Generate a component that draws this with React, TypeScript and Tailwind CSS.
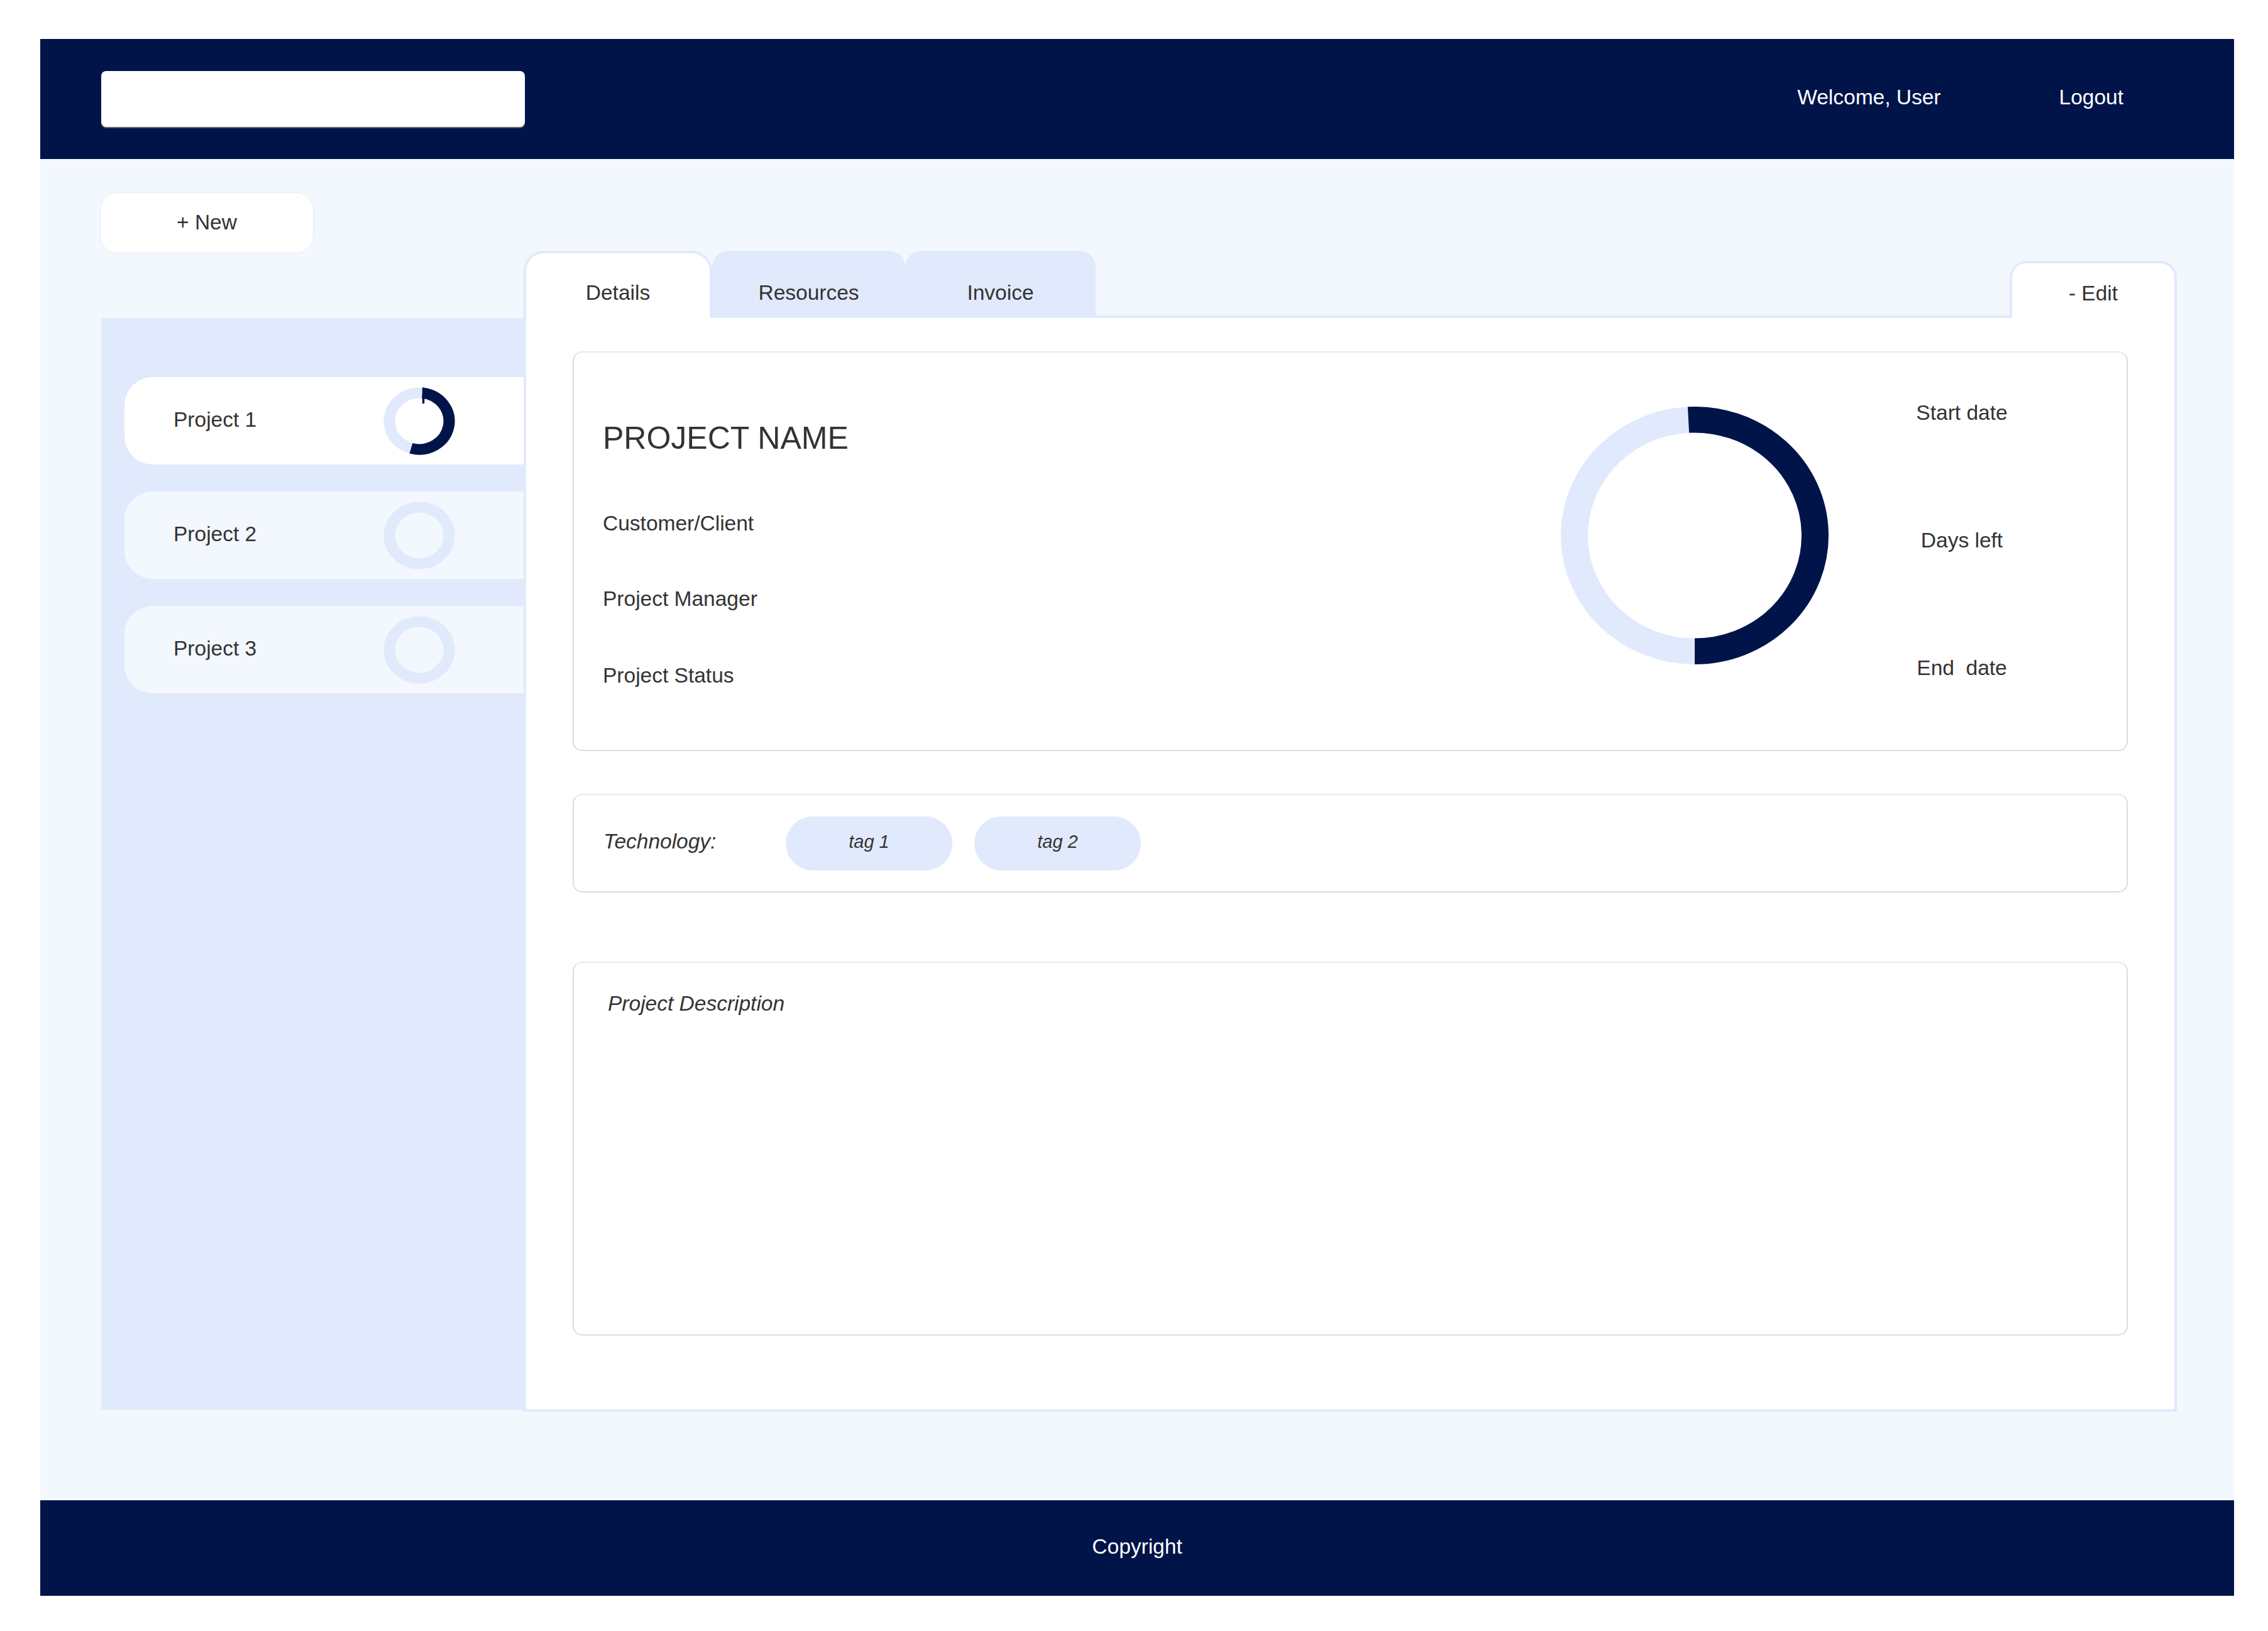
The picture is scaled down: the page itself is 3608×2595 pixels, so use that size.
import React from 'react';

const projects = [
  { name: 'Project 1', active: true },
  { name: 'Project 2', active: false },
  { name: 'Project 3', active: false },
];

// rings in the mock are a touch wider than tall, so the svg is stretched
function SmallRing({ active }: { active: boolean }) {
  return (
    <svg width="114" height="108" viewBox="0 0 114 114" preserveAspectRatio="none">
      <circle cx="57" cy="57" r="47.5" fill="none" stroke="#e1eafc" strokeWidth="18" />
      {active && (
        <>
          <path d="M 61.97 9.76 A 47.5 47.5 0 1 1 43.91 102.66" fill="none" stroke="#001449" strokeWidth="18" />
          <line x1="63.5" y1="2" x2="63.5" y2="26" stroke="#001449" strokeWidth="3.5" strokeLinecap="round" />
        </>
      )}
    </svg>
  );
}

function BigRing() {
  return (
    <svg width="426" height="410" viewBox="0 0 426 426" preserveAspectRatio="none">
      <circle cx="213" cy="213" r="191.5" fill="none" stroke="#e1eafc" strokeWidth="43" />
      <path d="M 202.98 21.76 A 191.5 191.5 0 1 1 213 404.5" fill="none" stroke="#001449" strokeWidth="43" />
    </svg>
  );
}

export default function App() {
  return (
    <div className="w-[3608px] h-[2595px] bg-white pt-[62px] pl-[64px] font-['Liberation_Sans',Arial,sans-serif] text-[33.5px] text-[#333333]">
      <div className="w-[3490px]">
        {/* Header */}
        <header className="h-[191px] bg-[#001449] flex items-center pl-[97px] pr-[176px]">
          <div className="w-[674px] h-[89px] bg-white rounded-[8px] shadow-[0_2px_0_#5f5f5f]" />
          <div className="ml-auto flex items-center gap-[188px] text-white -mt-[4px]">
            <span>Welcome, User</span>
            <span>Logout</span>
          </div>
        </header>

        {/* Body */}
        <main className="h-[2134px] bg-[#f3f7fe] flex pl-[95px] pt-[53px]">
          {/* Left column */}
          <div className="w-[674px] flex flex-col">
            <button className="w-[340px] h-[97px] bg-white rounded-[28px] border border-[#e6ecf6] text-[#333333] flex items-center justify-center">
              + New
            </button>
            <div className="ml-[2px] mt-[103px] w-[672px] h-[1737px] bg-[#e1eafc] pt-[94px] pl-[37px] flex flex-col gap-[43px]">
              {projects.map((p) => (
                <div
                  key={p.name}
                  className={
                    p.active
                      ? 'h-[139px] bg-white rounded-l-[45px] flex items-center pl-[78px]'
                      : 'h-[139px] bg-[#f3f7fe] rounded-l-[45px] flex items-center pl-[78px]'
                  }
                >
                  <span className="w-[334px] -mt-[2px]">{p.name}</span>
                  <SmallRing active={p.active} />
                </div>
              ))}
            </div>
          </div>

          {/* Right column */}
          <div className="mt-[93px] w-[2630px] flex flex-col">
            {/* Tabs */}
            <div className="h-[107px] flex items-end">
              <div className="w-[300px] h-[107px] bg-white border-x-4 border-t-4 border-[#e1eafc] rounded-t-[32px] flex items-center justify-center pt-[24px]">
                Details
              </div>
              <div className="w-[307px] h-[107px] bg-[#e1eafc] rounded-t-[26px] flex items-center justify-center pt-[28px]">
                Resources
              </div>
              <div className="w-[303px] h-[107px] bg-[#e1eafc] rounded-t-[26px] flex items-center justify-center pt-[28px]">
                Invoice
              </div>
              <div className="flex-1 h-[4px] bg-[#e1eafc]" />
              <div className="w-[266px] h-[91px] bg-white border-x-4 border-t-4 border-[#e1eafc] rounded-t-[26px] flex items-center justify-center pt-[9px]">
                - Edit
              </div>
            </div>

            {/* Panel */}
            <div className="h-[1740px] bg-white border-x-4 border-b-4 border-[#e1eafc] pt-[53px] px-[74px] flex flex-col">
              {/* Summary card */}
              <div className="h-[636px] rounded-[15px] border-2 border-[#d6dce8] border-t-[#e3e9f8] flex pl-[46px] pr-[132px]">
                <div className="flex-1 flex flex-col pt-[108px]">
                  <div className="text-[50px] leading-[56px]">PROJECT NAME</div>
                  <div className="mt-[88px] leading-[40px]">Customer/Client</div>
                  <div className="mt-[80px] leading-[40px]">Project Manager</div>
                  <div className="mt-[82px] leading-[40px]">Project Status</div>
                </div>
                <div className="mt-[86px]">
                  <BigRing />
                </div>
                <div className="w-[260px] ml-[82px] flex flex-col items-center pt-[76px] gap-[163px] leading-[40px]">
                  <span>Start date</span>
                  <span>Days left</span>
                  <span className="whitespace-pre">End  date</span>
                </div>
              </div>

              {/* Technology card */}
              <div className="mt-[68px] h-[157px] rounded-[15px] border-2 border-[#d6dce8] border-t-[#e3e9f8] flex items-center pl-[47px]">
                <span className="w-[290px] italic text-[33.5px] -mt-[5px]">Technology:</span>
                <div className="flex gap-[35px]">
                  <span className="w-[265px] h-[86px] rounded-full bg-[#e1eafc] flex items-center justify-center italic text-[29px] pb-[4px]">
                    tag 1
                  </span>
                  <span className="w-[265px] h-[86px] rounded-full bg-[#e1eafc] flex items-center justify-center italic text-[29px] pb-[4px]">
                    tag 2
                  </span>
                </div>
              </div>

              {/* Description card */}
              <div className="mt-[110px] h-[595px] rounded-[15px] border-2 border-[#d6dce8] border-t-[#e3e9f8] pl-[54px] pt-[45px]">
                <div className="italic leading-[40px]">Project Description</div>
              </div>
            </div>
          </div>
        </main>

        {/* Footer */}
        <footer className="h-[152px] bg-[#001449] flex items-center justify-center text-white pb-[4px]">
          Copyright
        </footer>
      </div>
    </div>
  );
}
